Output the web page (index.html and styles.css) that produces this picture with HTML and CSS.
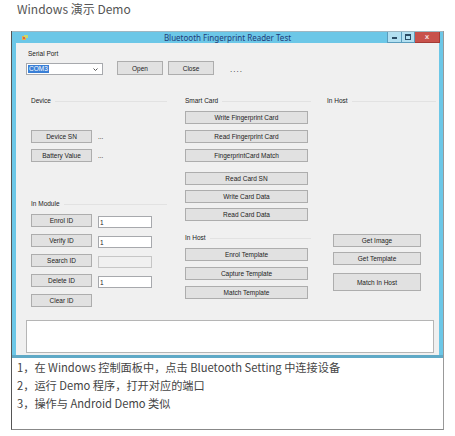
FILE: index.html
```html
<!DOCTYPE html>
<html lang="zh-CN">
<head>
  <meta charset="UTF-8">
  <meta name="viewport" content="width=device-width, initial-scale=1.0">
  <title>Windows 演示 Demo</title>
  <link rel="stylesheet" href="styles.css">
</head>
<body>
  <h1 class="heading">Windows 演示 Demo</h1>

  <div class="frame">
    <div class="window">
      <div class="titlebar">
        <svg class="app-icon" width="6" height="5" viewBox="0 0 6 5">
          <rect x="0" y="1" width="4" height="4" fill="#e8b04a"/>
          <rect x="2" y="0" width="4" height="3" fill="#c9d86a"/>
          <rect x="1" y="2" width="2" height="2" fill="#d9654a"/>
        </svg>
        <span class="title">Bluetooth Fingerprint Reader Test</span>
        <div class="win-buttons">
          <span class="wb wb-min"><i></i></span>
          <span class="wb wb-max"><i></i></span>
          <span class="wb wb-close">x</span>
        </div>
      </div>

      <div class="client">
        <div class="port">
          <div class="label">Serial Port</div>
          <div class="port-row">
            <div class="combo">
              <span class="sel">COM3</span>
              <svg class="chevron" width="5" height="3" viewBox="0 0 5 3"><path d="M0.5 0.5 L2.5 2.5 L4.5 0.5" fill="none" stroke="#444" stroke-width="0.9"/></svg>
            </div>
            <button class="btn btn-port">Open</button>
            <button class="btn btn-port">Close</button>
            <span class="dots">....</span>
          </div>
        </div>

        <div class="groups">
          <!-- left column: device info + module commands -->
          <div class="col col-left">
            <div class="group-label">Device</div>
            <div class="row row-first">
              <button class="btn btn-left">Device SN</button>
              <span class="more">...</span>
            </div>
            <div class="row">
              <button class="btn btn-left">Battery Value</button>
              <span class="more">...</span>
            </div>

            <div class="group-label group-module">In Module</div>
            <div class="row">
              <button class="btn btn-left">Enrol ID</button>
              <input class="field" type="text" value="1">
            </div>
            <div class="row">
              <button class="btn btn-left">Verify ID</button>
              <input class="field" type="text" value="1">
            </div>
            <div class="row">
              <button class="btn btn-left">Search ID</button>
              <input class="field field-off" type="text" value="" disabled>
            </div>
            <div class="row">
              <button class="btn btn-left">Delete ID</button>
              <input class="field" type="text" value="1">
            </div>
            <div class="row">
              <button class="btn btn-left">Clear ID</button>
            </div>
          </div>

          <!-- middle column: smart card + host templates -->
          <div class="col col-mid">
            <div class="group-label">Smart Card</div>
            <button class="btn btn-mid first">Write Fingerprint Card</button>
            <button class="btn btn-mid">Read Fingerprint Card</button>
            <button class="btn btn-mid">FingerprintCard Match</button>
            <button class="btn btn-mid card-first">Read Card SN</button>
            <button class="btn btn-mid tight">Write Card Data</button>
            <button class="btn btn-mid tight">Read Card Data</button>

            <div class="group-label group-host">In Host</div>
            <button class="btn btn-mid first">Enrol Template</button>
            <button class="btn btn-mid">Capture Template</button>
            <button class="btn btn-mid">Match Template</button>
          </div>

          <!-- right column: host image ops -->
          <div class="col col-right">
            <div class="group-label">In Host</div>
            <button class="btn btn-right get-image">Get Image</button>
            <button class="btn btn-right tight">Get Template</button>
            <button class="btn btn-right btn-tall">Match In Host</button>
          </div>
        </div>

        <div class="output"></div>
      </div>
    </div>

    <div class="steps">
      <p>1，在 Windows 控制面板中，点击 Bluetooth Setting 中连接设备</p>
      <p>2，运行 Demo 程序，打开对应的端口</p>
      <p>3，操作与 Android Demo 类似</p>
    </div>
  </div>
</body>
</html>
```

FILE: styles.css
```css
body {
  margin: 0;
  background: #fff;
  font-family: "Noto Sans CJK SC", "Noto Sans", sans-serif;
  color: #444;
}
.heading {
  margin: 0 0 13px 17px;
  font-size: 12px;
  font-weight: normal;
  line-height: 18px;
  color: #555;
}

/* outer box around the screenshot and the notes */
.frame {
  margin-left: 11px;
  width: 431px;
  border-left: 1px solid #555;
  border-right: 1px solid #999;
  border-bottom: 1px solid #888;
}

.window {
  background: #6cc7e7;
  border-top: 1px solid #9fb7c2;
  border-bottom: 3px solid #5fa9c6;
}
.titlebar {
  height: 11px;
  display: flex;
  align-items: center;
  position: relative;
  padding-left: 10px;
}
.app-icon {
  display: block;
}
.title {
  position: absolute;
  left: 0;
  right: 0;
  text-align: center;
  font-family: "Noto Sans", sans-serif;
  font-size: 8px;
  line-height: 11px;
  color: #1f3c78;
}
.win-buttons {
  margin-left: auto;
  display: flex;
  align-self: flex-start;
  margin-right: 3px;
  height: 11px;
}
.wb {
  display: flex;
  align-items: center;
  justify-content: center;
  height: 10px;
  border: 1px solid #5a9cbc;
  border-top: none;
  background: #b3e0f1;
}
.wb-min {
  width: 13px;
}
.wb-min i {
  width: 5px;
  height: 2px;
  margin-top: 2px;
  background: #2b4d66;
}
.wb-max {
  width: 12px;
  border-left: none;
}
.wb-max i {
  width: 4px;
  height: 3px;
  border: 1px solid #2b4d66;
  border-top-width: 2px;
}
.wb-close {
  width: 24px;
  border-color: #a33b35;
  border-left: none;
  background: #c8514b;
  color: #f3d6d4;
  font-family: "DejaVu Sans", sans-serif;
  font-size: 7px;
  font-weight: bold;
  line-height: 10px;
}

/* form area */
.client {
  background: #f0f0f0;
  margin: 0 4px 0 4px;
  padding: 7px 5px 2px 10px;
  font-family: "Liberation Sans", Arial, sans-serif;
  font-size: 6.5px;
  color: #222;
}
.label {
  line-height: 8px;
  margin-left: 2px;
}
.port-row {
  display: flex;
  align-items: flex-start;
  margin-top: 3px;
}
.combo {
  width: 70px;
  height: 10px;
  margin-top: 2px;
  border: 1px solid #a7a9ad;
  background: #fff;
  display: flex;
  align-items: center;
  padding: 0 4px 0 1px;
}
.sel {
  background: #3a7fd6;
  color: #fff;
  line-height: 8px;
  padding: 0 1px;
}
.chevron {
  margin-left: auto;
}
.btn {
  display: block;
  margin: 0;
  padding: 0;
  height: 13px;
  border: 1px solid #adadad;
  background: #e1e1e1;
  font: inherit;
  color: #222;
  line-height: 11px;
  text-align: center;
}
.btn-port {
  width: 46px;
  height: 14px;
  margin-left: 5px;
}
.port-row .btn-port:first-of-type {
  margin-left: 14px;
}
.dots {
  margin: 5px 0 0 16px;
  font-size: 8px;
  letter-spacing: 1px;
  line-height: 8px;
  color: #222;
}

/* three columns of grouped commands */
.groups {
  display: grid;
  grid-template-columns: 136px 126px 107px;
  column-gap: 18px;
  margin: 22px 0 0 5px;
  height: 216px;
}
.col-right {
  margin-left: -2px;
}
.group-label {
  display: flex;
  align-items: center;
  line-height: 8px;
  height: 8px;
}
.group-label::after {
  content: "";
  flex: 1;
  height: 1px;
  margin-left: 4px;
  background: #e2e2e2;
}
.group-module {
  margin-top: 38px;
}
.group-host {
  margin-top: 13px;
}
.row {
  display: flex;
  align-items: flex-start;
  margin-top: 6px;
}
.row-first {
  margin-top: 25px;
}
.btn-left {
  width: 61px;
}
.more {
  margin-left: 6px;
  line-height: 13px;
  color: #222;
}
.field {
  box-sizing: border-box;
  width: 54px;
  height: 12px;
  margin: 2px 0 0 6px;
  padding: 0 1px;
  border: 1px solid #a7a9ad;
  background: #fff;
  font: inherit;
  color: #222;
}
.field-off {
  background: #f0f0f0;
  border-color: #c6c6c6;
}
.btn-mid {
  width: 123px;
  margin-top: 6px;
}
.btn-mid.card-first {
  margin-top: 10px;
}
.btn-mid.tight,
.btn-right.tight {
  margin-top: 5px;
}
.btn-right {
  width: 88px;
  margin-left: 6px;
}
.get-image {
  margin-top: 129px;
}
.btn-tall {
  height: 18px;
  margin-top: 8px;
}
.output {
  height: 31px;
  margin: 7px 0 0 0;
  background: #fff;
  border: 1px solid #b5b5b5;
}

/* notes under the screenshot */
.steps {
  padding: 0 0 17px 5px;
  font-size: 11.2px;
  line-height: 18px;
  color: #444;
}
.steps p {
  margin: 0;
}
```
